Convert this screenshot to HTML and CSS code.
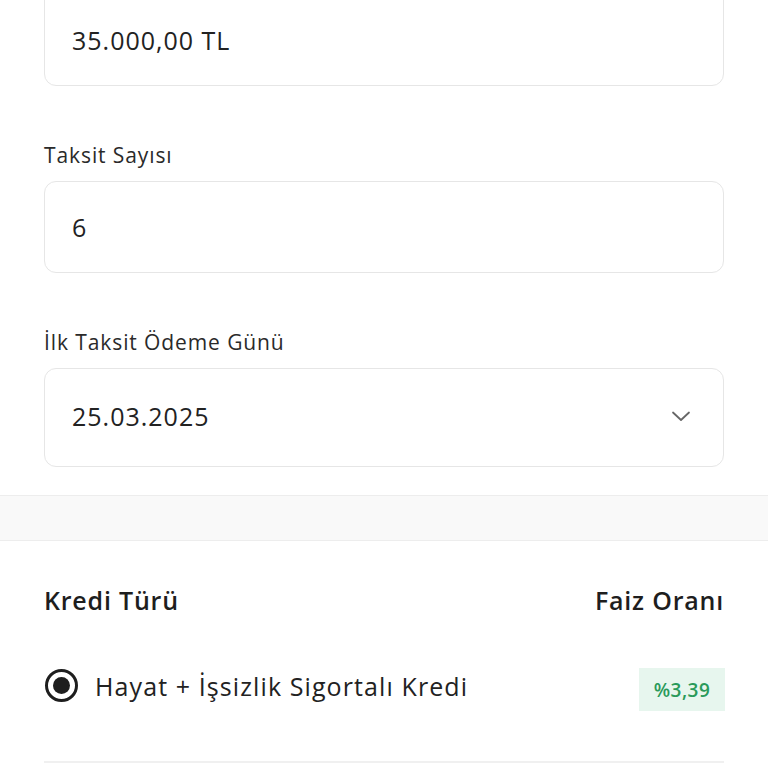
FILE: index.html
```html
<!DOCTYPE html>
<html lang="tr">
<head>
<meta charset="utf-8">
<link rel="stylesheet" href="styles.css">
</head>
<body>
<div class="page">
  <div class="form">
    <div class="field field-first">
      <div class="input input-amount">35.000,00 TL</div>
    </div>
    <div class="field">
      <div class="label">Taksit Sayısı</div>
      <div class="input input-count">6</div>
    </div>
    <div class="field">
      <div class="label">İlk Taksit Ödeme Günü</div>
      <div class="input input-date">
        <span>25.03.2025</span>
        <svg class="chevron" width="20" height="12" viewBox="0 0 20 12"><path d="M2 2.5 L10 10 L18 2.5" fill="none" stroke="#666" stroke-width="1.8" stroke-linecap="round" stroke-linejoin="round"/></svg>
      </div>
    </div>
  </div>
  <div class="band"></div>
  <div class="table">
    <div class="thead">
      <span>Kredi Türü</span>
      <span>Faiz Oranı</span>
    </div>
    <div class="row">
      <div class="opt">
        <span class="radio"><span class="dot"></span></span>
        <span class="opt-text">Hayat + İşsizlik Sigortalı Kredi</span>
      </div>
      <span class="badge">%3,39</span>
    </div>
  </div>
</div>
</body>
</html>
```
FILE: styles.css
```css
* { box-sizing: border-box; }
html, body { margin: 0; padding: 0; background: #fff; }
body {
  font-family: "Open Sans", "Liberation Sans", sans-serif;
  color: #222;
  overflow: hidden;
  height: 768px;
}
.page { width: 768px; }
.form { padding: 0 44px; }
.field { display: flex; flex-direction: column; }
.field-first { margin-top: -12px; }
.label {
  font-size: 21px;
  letter-spacing: 0.9px;
  line-height: 24px;
  margin-top: 57px;
  margin-bottom: 14px;
  color: #2a2a2a;
}
.input {
  border: 1.5px solid #e6e6e6;
  border-radius: 12px;
  padding: 0 27px;
  font-size: 25px;
  letter-spacing: 1px;
  display: flex;
  align-items: center;
  color: #222;
}
.input-amount { height: 98px; padding-top: 6px; }
.input-count { height: 92px; }
.input-date { height: 99px; justify-content: space-between; padding-right: 32px; }
.input-date span { margin-top: -3px; }
.chevron { margin-top: -4px; }
.band {
  margin-top: 28px;
  height: 46px;
  background: #f9f9f9;
  border-top: 1px solid #ededed;
  border-bottom: 1px solid #ededed;
}
.table { padding: 0 44px; }
.thead {
  display: flex;
  justify-content: space-between;
  font-size: 25px;
  letter-spacing: 0.8px;
  font-weight: 600;
  color: #1e1e1e;
  margin-top: 43px;
  line-height: 32px;
}
.row {
  margin-top: 48px;
  display: flex;
  justify-content: space-between;
  align-items: center;
  padding-bottom: 54px;
  border-bottom: 2px solid #f0f0f0;
}
.opt { display: flex; align-items: center; gap: 17px; }
.radio {
  width: 33px; height: 33px;
  border: 3.5px solid #1e1e1e;
  border-radius: 50%;
  display: flex; align-items: center; justify-content: center;
  margin-left: 1px;
}
.dot { width: 17px; height: 17px; border-radius: 50%; background: #1e1e1e; }
.opt-text { font-size: 25px; letter-spacing: 1.1px; color: #222; }
.badge {
  background: #e7f6ee;
  color: #2a9a5a;
  font-size: 19px;
  letter-spacing: 0.5px;
  font-weight: 600;
  width: 86px;
  height: 43px;
  margin-top: 4px;
  margin-bottom: -4px;
  margin-right: -1px;
  display: flex; align-items: center; justify-content: center;
}
```
